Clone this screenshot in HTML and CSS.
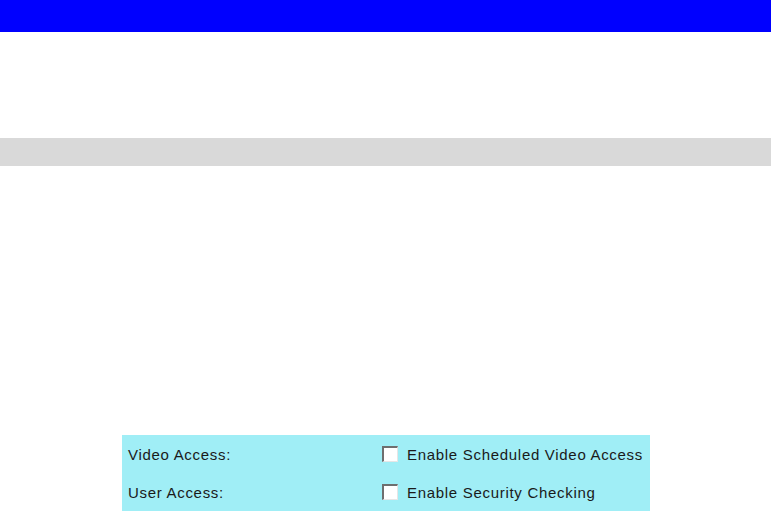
FILE: index.html
```html
<!DOCTYPE html>
<html lang="en">
<head>
    <meta charset="UTF-8">
    <meta name="viewport" content="width=device-width, initial-scale=1.0">
    <title>Video Access</title>
    <link rel="stylesheet" href="styles.css">
</head>
<body>
    <div class="title-bar"></div>
    <div class="section-bar"></div>

    <div class="access-panel">
        <div class="access-row">
            <span class="access-label">Video Access:</span>
            <label class="access-option">
                <span class="checkbox"></span>
                Enable Scheduled Video Access
            </label>
        </div>
        <div class="access-row">
            <span class="access-label">User Access:</span>
            <label class="access-option">
                <span class="checkbox"></span>
                Enable Security Checking
            </label>
        </div>
    </div>
</body>
</html>
```

FILE: styles.css
```css
body {
    margin: 0;
    background-color: #ffffff;
    font-family: 'Liberation Sans', Arial, sans-serif;
    font-size: 15px;
    letter-spacing: 0.7px;
    color: #1a1a1a;
}

.title-bar {
    height: 32px;
    background-color: #0000ff;
}

.section-bar {
    height: 28px;
    margin-top: 106px;
    background-color: #d9d9d9;
}

.access-panel {
    width: 528px;
    margin: 269px 0 0 122px;
    background-color: #a0eef6;
}

.access-row {
    display: flex;
    align-items: center;
    height: 38px;
    padding-left: 6px;
}

.access-label {
    width: 254px;
}

.access-option {
    display: flex;
    align-items: center;
    gap: 9px;
}

.checkbox {
    width: 13px;
    height: 13px;
    background-color: #ffffff;
    border-top: 2px solid #6e6e6e;
    border-left: 2px solid #6e6e6e;
    border-right: 1px solid #e6e6e6;
    border-bottom: 1px solid #e6e6e6;
}
```
